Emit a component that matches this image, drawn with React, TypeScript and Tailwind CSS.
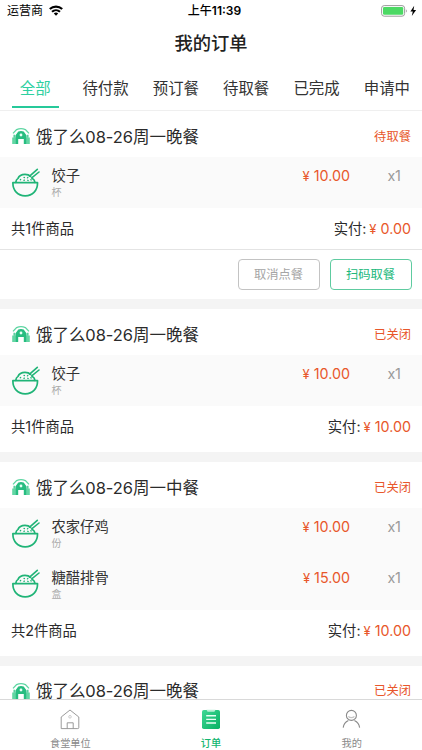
import React, { useState } from "react";
import clsx from "clsx";

type Dish = {
  name: string;
  unit: string;
  price: string;
  count: number;
};

type Order = {
  id: number;
  title: string;
  status: string;
  dishes: Dish[];
  paid: string;
  actions?: boolean;
};

const TABS = ["全部", "待付款", "预订餐", "待取餐", "已完成", "申请中"];

const ORDERS: Order[] = [
  {
    id: 1,
    title: "饿了么08-26周一晚餐",
    status: "待取餐",
    dishes: [{ name: "饺子", unit: "杯", price: "10.00", count: 1 }],
    paid: "0.00",
    actions: true,
  },
  {
    id: 2,
    title: "饿了么08-26周一晚餐",
    status: "已关闭",
    dishes: [{ name: "饺子", unit: "杯", price: "10.00", count: 1 }],
    paid: "10.00",
  },
  {
    id: 3,
    title: "饿了么08-26周一中餐",
    status: "已关闭",
    dishes: [
      { name: "农家仔鸡", unit: "份", price: "10.00", count: 1 },
      { name: "糖醋排骨", unit: "盒", price: "15.00", count: 1 },
    ],
    paid: "10.00",
  },
  {
    id: 4,
    title: "饿了么08-26周一晚餐",
    status: "已关闭",
    dishes: [],
    paid: "10.00",
  },
];

const WifiIcon = () => (
  <svg width="14" height="11" viewBox="0 0 14 11" fill="none" stroke="#000" strokeWidth="2.1">
    <path d="M0.8 4.1a8.9 8.9 0 0 1 12.4 0" />
    <path d="M3 6.8a5.8 5.8 0 0 1 8 0" />
    <path d="M7 10.8 4.8 8.5a3.2 3.2 0 0 1 4.4 0z" fill="#000" stroke="none" />
  </svg>
);

const BatteryIcon = () => (
  <svg width="37" height="12" viewBox="0 0 37 12" fill="none">
    <rect x="0.6" y="0.6" width="23" height="10.6" rx="2.6" stroke="#9b9b9b" strokeWidth="1" />
    <rect x="2" y="2" width="20.2" height="7.8" rx="1.3" fill="#4cd964" />
    <path d="M24.9 4.2c1.2.5 1.2 2.9 0 3.4z" fill="#9b9b9b" />
    <path d="M33.2 0.8 29.4 6.4h2.4l-1 4.6 4.3-6h-2.6z" fill="#000" />
  </svg>
);

const CanteenIcon = () => (
  <svg width="18" height="17" viewBox="0 0 18 17" fill="none">
    <path d="M1 5.4 4.6 1.6Q9-.2 13.4 1.6L17 5.4" stroke="#5fd6a3" strokeWidth="1.3" />
    <path d="M0.2 9.6h3.4V16H0.2zM14.4 9.6h3.4V16h-3.4z" fill="#62d6a3" />
    <path d="M3.4 16V7.6L6.3 3.6Q9 2.4 11.7 3.6l2.9 4V16h-2.8v-5H6.2v5z" fill="#27bd80" />
    <circle cx="9" cy="7" r="1.4" fill="#e8fff5" />
    <path d="M2.2 6.8v3M15.8 6.8v3" stroke="#47ca94" strokeWidth="1.4" />
  </svg>
);

const BowlIcon = () => (
  <svg
    width="28"
    height="29"
    viewBox="0 0 28 29"
    fill="none"
    stroke="#20b477"
    strokeWidth="1.7"
    strokeLinecap="round"
    strokeLinejoin="round"
  >
    <path d="M0.9 14.6h24.6c.3 7.8-4.9 13.2-12.3 13.2S0.6 22.4 0.9 14.6z" />
    <path d="M3.8 14.4c.1-1.8.8-3.1 2.2-4 .9-2.4 3.7-4.1 7-4.1 2.3 0 4.3.7 5.6 2M20.4 10.4c1.6.8 2.4 2.1 2.5 4" />
    <path d="M17.6 8.2 25.3 1.3M19.7 9.9 27 4" strokeWidth="1.6" />
    <path
      d="M8.3 11.8l.4-.4M12 9.4l.5.2M15.8 9.5l-.4.4M11.9 12.3l.5-.2M15.8 12.3l.4.2M19.2 12l-.3-.4"
      strokeWidth="1.3"
    />
  </svg>
);

const HomeIcon = () => (
  <svg width="20" height="21" viewBox="0 0 20 21" fill="none" stroke="#8e8e8e" strokeWidth="0.9">
    <path d="M1.2 19.6V8L10 1l8.8 7v10.6a1 1 0 0 1-1 1z" strokeLinejoin="round" />
    <path d="M7.2 19.5v-5.7h6v5.7" />
    <circle cx="10" cy="7.8" r="1.3" stroke="#c6c6c6" />
  </svg>
);

const OrderIcon = () => (
  <svg width="20" height="21" viewBox="0 0 20 21" fill="none">
    <defs>
      <linearGradient id="order-fill" x1="0" y1="0" x2="1" y2="1">
        <stop offset="0" stopColor="#3fd795" />
        <stop offset="1" stopColor="#06b163" />
      </linearGradient>
    </defs>
    <rect x="1" y="1" width="18" height="19" rx="1.8" fill="url(#order-fill)" />
    <path d="M5.4 0.8h9.2l-1.2 1.9H6.6z" fill="#b9f0d6" />
    <path d="M5.2 6.8h9.8M5.2 10.4h9.8M5.2 14h9.8" stroke="#eafff5" strokeWidth="1.4" />
  </svg>
);

const UserIcon = () => (
  <svg width="20" height="21" viewBox="0 0 20 21" fill="none" stroke="#8a8a8a" strokeWidth="1.1">
    <circle cx="9.4" cy="6.4" r="5" />
    <path d="M6.4 7.3c1.4 1.8 4.6 1.8 6 0" stroke="#c4c4c4" />
    <path d="M1.2 18.6c.4-3.4 2.2-5.7 5.2-7.1M17.6 18.6c-.4-3.4-2.2-5.7-5.2-7.1" />
  </svg>
);

const NAV = [
  { label: "食堂单位", icon: HomeIcon },
  { label: "订单", icon: OrderIcon },
  { label: "我的", icon: UserIcon },
];

const Price = ({ value }: { value: string }) => (
  <span className="text-[#e8572b]">
    <span className="text-[13px]">¥</span> {value}
  </span>
);

const DishRow = ({ dish }: { dish: Dish }) => (
  <div className="flex h-[50.7px] bg-[#fafafa] pl-3">
    <div className="w-[39.5px] pt-[10.5px]">
      <BowlIcon />
    </div>
    <div className="flex-1 pt-2">
      <div className="text-[14.3px] leading-[21px] text-[#333]">{dish.name}</div>
      <div className="text-[10px] leading-[13px] text-[#aaa]">{dish.unit}</div>
    </div>
    <div className="pt-2 text-[14.3px] leading-[21px]">
      <Price value={dish.price} />
    </div>
    <div className="w-[72px] pt-2 pr-[18.5px] text-right text-[14.3px] leading-[21px] text-[#999]">
      <span className="inline-block w-[19px] text-center tracking-[-0.3px]">x{dish.count}</span>
    </div>
  </div>
);

const OrderCard = ({ order }: { order: Order }) => (
  <section className="shrink-0 border-b-10 border-[#f4f4f4] bg-white">
    <div className="flex h-[46px] items-center pt-[6px] pr-[11px] pl-3">
      <div className="-mt-px">
        <CanteenIcon />
      </div>
      <h2 className="ml-[6px] flex-1 text-[16.5px] tracking-[-0.05px] text-[#2b2b2b]">{order.title}</h2>
      <span className="text-[12.3px] text-[#e8572b]">{order.status}</span>
    </div>
    {order.dishes.map((dish) => (
      <DishRow key={dish.name} dish={dish} />
    ))}
    {order.dishes.length > 0 && (
      <div
        className={clsx(
          "flex justify-between px-[11px] text-[14.3px] leading-[41px] text-[#2b2b2b]",
          order.actions ? "h-[41.3px]" : "h-[46px]"
        )}
      >
        <span>共{order.dishes.length}件商品</span>
        <span>
          实付:
          <span className="ml-[3px]">
            <Price value={order.paid} />
          </span>
        </span>
      </div>
    )}
    {order.actions && (
      <div className="flex h-[50.5px] items-center justify-end gap-[10px] border-t border-[#e4e4e4] pr-[10.5px]">
        <button className="h-[31px] w-[82px] rounded-[4px] border border-[#c3c3c3] text-[12.3px] text-[#a5a5a5]">
          取消点餐
        </button>
        <button className="h-[31px] w-[82px] rounded-[4px] border border-[#5ecba0] text-[12.3px] text-[#20b87b]">
          扫码取餐
        </button>
      </div>
    )}
  </section>
);

export default function App() {
  const [tab, setTab] = useState(0);

  return (
    <div className="flex h-[750px] w-[422px] flex-col overflow-hidden bg-white font-[Inter,'Noto_Sans_CJK_SC',sans-serif]">
      <div className="grid h-[21px] shrink-0 grid-cols-3 items-center pr-1 pl-[7px] text-black">
        <div className="flex items-center gap-[6px] text-[12px]">
          <span className="pt-px">运营商</span>
          <WifiIcon />
        </div>
        <div className="pt-px pl-1 text-center text-[12px] font-semibold">
          <span className="font-medium">上午</span>11:39
        </div>
        <div className="flex justify-end">
          <BatteryIcon />
        </div>
      </div>

      <h1 className="h-[45px] shrink-0 text-center text-[18.3px] leading-[44px] font-medium text-[#222]">我的订单</h1>

      <div className="grid h-[45px] shrink-0 grid-cols-6 border-b border-[#efefef]">
        {TABS.map((label, i) => (
          <button
            key={label}
            onClick={() => setTab(i)}
            className={clsx(
              "flex flex-col items-center text-[15.4px] leading-[46px] whitespace-nowrap",
              tab === i ? "text-[#2ed0a0]" : "text-[#333]"
            )}
          >
            <span className="h-10">{label}</span>
            {tab === i && <span className="h-[2px] w-[47px] bg-[#26c99a]" />}
          </button>
        ))}
      </div>

      <main className="flex min-h-0 flex-1 flex-col overflow-hidden">
        {ORDERS.map((order) => (
          <OrderCard key={order.id} order={order} />
        ))}
      </main>

      <nav className="grid h-[51px] shrink-0 grid-cols-3 border-t border-[#d9d9d9] bg-white">
        {NAV.map(({ label, icon: Icon }, i) => (
          <button
            key={label}
            className={clsx(
              "flex flex-col items-center pt-[9px] text-[10.2px] leading-[15px]",
              i === 1 ? "font-medium text-[#12b56f]" : "text-[#8a8a8a]"
            )}
          >
            <Icon />
            <span className="mt-[6px]">{label}</span>
          </button>
        ))}
      </nav>
    </div>
  );
}
